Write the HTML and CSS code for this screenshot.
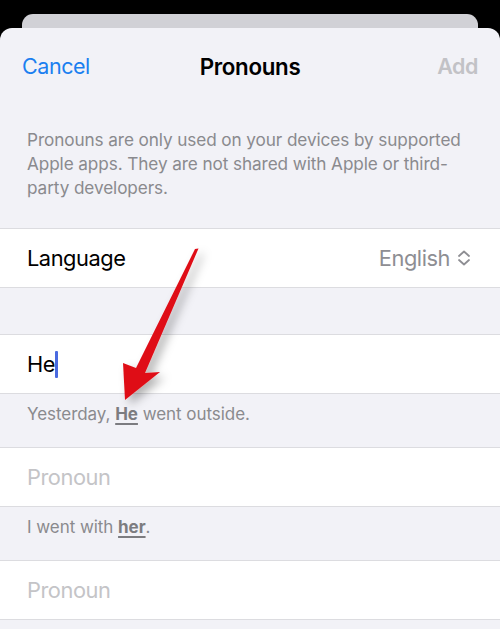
FILE: index.html
```html
<!DOCTYPE html>
<html lang="en">
<head>
<meta charset="utf-8">
<title>Pronouns</title>
<link rel="stylesheet" href="styles.css">
</head>
<body>
<div class="screen">
  <div class="back-card"></div>
  <div class="sheet">
    <header class="nav">
      <span class="nav-cancel">Cancel</span>
      <span class="nav-title">Pronouns</span>
      <span class="nav-add">Add</span>
    </header>
    <p class="desc">Pronouns are only used on your devices by supported Apple apps. They are not shared with Apple or third-party developers.</p>

    <div class="row row-lang">
      <span class="row-label">Language</span>
      <span class="row-value">English
        <svg class="updown" viewBox="0 0 14 16" width="14" height="16" aria-hidden="true">
          <path d="M2 6 L7 1.5 L12 6" fill="none" stroke="#8e8e93" stroke-width="1.8" stroke-linecap="round" stroke-linejoin="round"/>
          <path d="M2 10 L7 14.5 L12 10" fill="none" stroke="#8e8e93" stroke-width="1.8" stroke-linecap="round" stroke-linejoin="round"/>
        </svg>
      </span>
    </div>

    <div class="gap"></div>

    <div class="row"><span class="row-label">He</span><span class="caret"></span></div>
    <div class="foot">Yesterday, <u class="em">He</u> went outside.</div>

    <div class="row"><span class="placeholder">Pronoun</span></div>
    <div class="foot">I went with <u class="em">her</u>.</div>

    <div class="row"><span class="placeholder">Pronoun</span></div>
  </div>

  <svg class="arrow" viewBox="0 0 500 629" width="500" height="629" aria-hidden="true">
    <defs>
      <filter id="sh" x="-50%" y="-50%" width="200%" height="200%">
        <feDropShadow dx="5" dy="5" stdDeviation="5" flood-color="#000" flood-opacity="0.3"/>
      </filter>
    </defs>
    <polygon filter="url(#sh)" fill="#df1018" points="125,400 123,363 136,368 195,249 198.5,248.5 145,373 160,372"/>
  </svg>
</div>
</body>
</html>
```

FILE: styles.css
```css
* { box-sizing: border-box; }
html, body { margin: 0; padding: 0; }
body {
  background: #000;
  font-family: "Inter", "Noto Sans", "Liberation Sans", sans-serif;
  -webkit-font-smoothing: antialiased;
}
.screen {
  position: relative;
  width: 500px;
  height: 629px;
  overflow: hidden;
  padding-top: 14px;
}
.back-card {
  margin: 0 22px;
  height: 14px;
  background: #d1d1d6;
  border-radius: 11px 11px 0 0;
}
.sheet {
  background: #f2f2f7;
  border-radius: 12px 12px 0 0;
  height: 601px;
}
.nav {
  height: 76px;
  display: grid;
  grid-template-columns: 1fr auto 1fr;
  align-items: center;
  padding: 0 22px;
  font-size: 21.5px;
  letter-spacing: -0.45px;
}
.nav-cancel { color: #1a7ff0; justify-self: start; }
.nav-title { font-weight: 600; color: #000; font-size: 22.3px; letter-spacing: -0.3px; }
.nav-add { color: #c2c2c6; font-weight: 600; justify-self: end; }
.desc {
  margin: 24px 0 28px;
  padding: 0 27px 0 27px;
  font-size: 17.2px;
  line-height: 24px;
  color: #8a8a8e;
  letter-spacing: -0.1px;
}
.row {
  background: #fff;
  height: 60px;
  border-top: 1px solid #dcdce0;
  border-bottom: 1px solid #dcdce0;
  display: flex;
  align-items: center;
  padding: 0 27px;
  font-size: 21.8px;
  letter-spacing: -0.45px;
}
.row-lang { justify-content: space-between; padding-right: 29px; }
.row-label { color: #000; }
.row-value {
  color: #8e8e93;
  display: flex;
  align-items: center;
  gap: 7px;
}
.updown { display: block; }
.caret {
  display: inline-block;
  width: 2.5px;
  height: 27px;
  background: #4a6ae0;
  border-radius: 1px;
}
.placeholder { color: #c4c4c7; }
.gap { height: 46px; }
.foot {
  height: 53px;
  padding: 9px 27px 0;
  font-size: 17px;
  line-height: 22px;
  color: #8a8a8e;
  letter-spacing: -0.05px;
}
.em {
  font-weight: 700;
  color: #7c7c80;
  text-decoration-thickness: 1.5px;
  text-underline-offset: 3px;
}
.arrow {
  position: absolute;
  left: 0;
  top: 0;
  pointer-events: none;
}
```
